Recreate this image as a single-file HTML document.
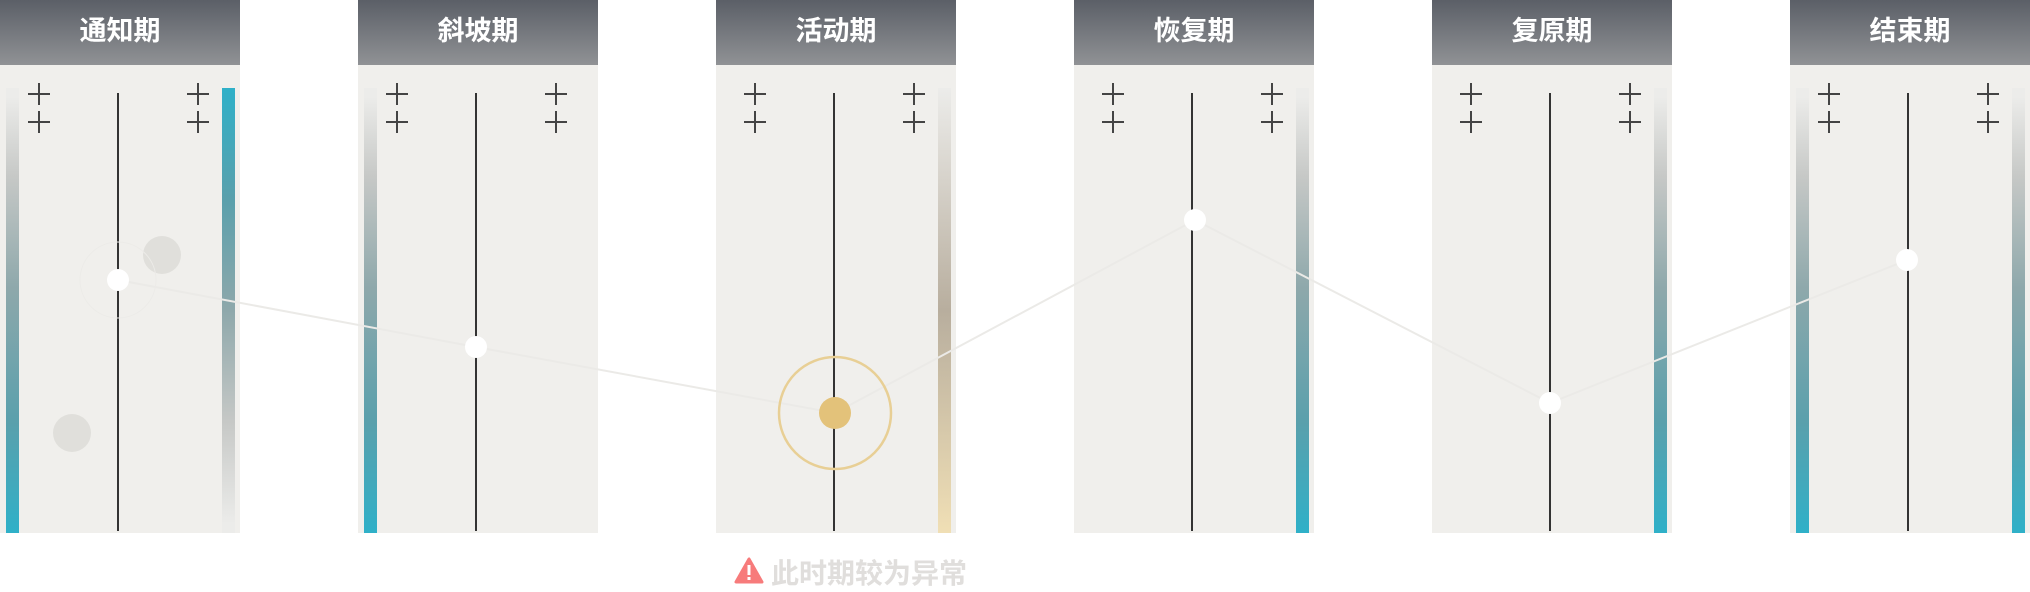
<!DOCTYPE html>
<html><head><meta charset="utf-8"><style>
*{margin:0;padding:0;box-sizing:border-box}
body{width:2030px;height:590px;background:#fff;position:relative;overflow:hidden;font-family:"Liberation Sans","Noto Sans CJK SC",sans-serif}
.p{position:absolute;top:0;width:240px;height:533px;background:#f0efec}
.h{height:65px;background:linear-gradient(#5b5f67,#909295);color:#fff;font-size:27px;text-align:center;line-height:62px;font-weight:bold}
.ln{position:absolute;left:117px;top:93px;width:2px;height:438px;background:#333}
.bar{position:absolute;top:88px;width:13px;height:445px}
.l{left:6px}.r{left:222px}
.pl{position:absolute;width:22px;height:22px}
.pl:before{content:"";position:absolute;left:10px;top:0;width:2px;height:22px;background:#444}
.pl:after{content:"";position:absolute;top:10px;left:0;height:2px;width:22px;background:#444}
.up{background:linear-gradient(#ececea 2%,#c6c8c6 20%,#8ea8ab 45%,#5aa0ac 75%,#2fb0c8)}
.gd{background:linear-gradient(#ececea,#b8ae9e 50%,#f0dfb5)}
</style></head><body>
<div class="p" style="left:0"><div class="h">通知期</div><div class="bar l up"></div><div class="bar r" style="background:linear-gradient(#2fb0c8,#5aa0ac 25%,#8ea8ab 50%,#c6c8c6 75%,#ececea 98%)"></div><div class="ln"></div></div>
<div class="p" style="left:358px"><div class="h">斜坡期</div><div class="bar l up"></div><div class="ln"></div></div>
<div class="p" style="left:716px"><div class="h">活动期</div><div class="bar r gd"></div><div class="ln"></div></div>
<div class="p" style="left:1074px"><div class="h">恢复期</div><div class="bar r up"></div><div class="ln"></div></div>
<div class="p" style="left:1432px"><div class="h">复原期</div><div class="bar r up"></div><div class="ln"></div></div>
<div class="p" style="left:1790px"><div class="h">结束期</div><div class="bar l up"></div><div class="bar r up"></div><div class="ln"></div></div>
<div id="pl"></div>
<svg width="2030" height="590" style="position:absolute;left:0;top:0">
<circle cx="162" cy="255" r="19" fill="#e0dfdb"/>
<circle cx="72" cy="433" r="19" fill="#e0dfdb"/>
<polyline points="118,280 476,347 835,413 1195,220 1550,403 1907,260" fill="none" stroke="#ebeae7" stroke-width="2"/>
<circle cx="118" cy="280" r="38" fill="none" stroke="#ecebe8" stroke-width="1"/>
<circle cx="835" cy="413" r="56" fill="none" stroke="#e8cf95" stroke-width="2.5"/>
<circle cx="835" cy="413" r="16" fill="#e3c27a"/>
<g fill="#fff"><circle cx="118" cy="280" r="11"/><circle cx="476" cy="347" r="11"/><circle cx="1195" cy="220" r="11"/><circle cx="1550" cy="403" r="11"/><circle cx="1907" cy="260" r="11"/></g>
<path d="M749 559 L736 582 L762 582 Z" fill="#f77b7b" stroke="#f77b7b" stroke-width="3" stroke-linejoin="round"/>
<rect x="747.5" y="565" width="3" height="10" fill="#fff"/><rect x="747.5" y="577" width="3" height="3" fill="#fff"/>
</svg>
<div style="position:absolute;left:771px;top:552px;font-size:28px;color:#e0dedc;font-weight:bold">此时期较为异常</div>
<script>
var h='';[0,358,716,1074,1432,1790].forEach(function(x){[28,187].forEach(function(dx){[83,111].forEach(function(y){h+='<div class="pl" style="left:'+(x+dx)+'px;top:'+y+'px"></div>'})})});
document.getElementById('pl').innerHTML=h;
</script>
</body></html>
